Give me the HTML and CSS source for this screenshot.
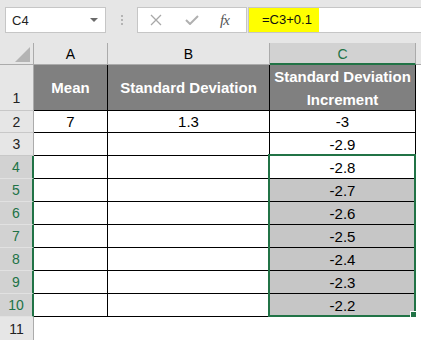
FILE: index.html
```html
<!DOCTYPE html>
<html lang="en">
<head>
    <meta charset="UTF-8">
    <title>Standard Deviation Increment</title>
    <link rel="stylesheet" href="styles.css">
</head>
<body>
    <div class="toolbar">
        <div class="namebox">
            <span>C4</span>
            <span class="caret"></span>
        </div>
        <div class="grip"><i></i><i></i><i></i></div>
        <div class="fbtns">
            <svg class="ico-x" width="12" height="12" viewBox="0 0 12 12">
                <path d="M1 1 L11 11 M11 1 L1 11" stroke="#a8a8a8" stroke-width="1.3" fill="none"/>
            </svg>
            <svg class="ico-check" width="14" height="10" viewBox="0 0 14 10">
                <path d="M1 5 L5 9 L13 1" stroke="#b0b0b0" stroke-width="2" fill="none"/>
            </svg>
            <span class="fx">fx</span>
        </div>
        <div class="finput"><span class="formula">=C3+0.1</span></div>
    </div>

    <div class="sheet">
        <!-- column headers -->
        <div class="corner"><span class="tri"></span></div>
        <div class="colhd">A</div>
        <div class="colhd">B</div>
        <div class="colhd active">C</div>
        <div class="colhd rest"></div>

        <!-- row 1 -->
        <div class="rowhd tall">1</div>
        <div class="cell hd">Mean</div>
        <div class="cell hd">Standard Deviation</div>
        <div class="cell hd">Standard Deviation<br>Increment</div>
        <div class="blank"></div>

        <!-- row 2 -->
        <div class="rowhd">2</div>
        <div class="cell">7</div>
        <div class="cell">1.3</div>
        <div class="cell">-3</div>
        <div class="blank"></div>

        <!-- row 3 -->
        <div class="rowhd">3</div>
        <div class="cell"></div>
        <div class="cell"></div>
        <div class="cell">-2.9</div>
        <div class="blank"></div>

        <!-- selected rows 4-10 -->
        <div class="rowhd sel">4</div>
        <div class="cell"></div>
        <div class="cell"></div>
        <div class="cell">-2.8</div>
        <div class="blank"></div>

        <div class="rowhd sel">5</div>
        <div class="cell"></div>
        <div class="cell"></div>
        <div class="cell shade">-2.7</div>
        <div class="blank"></div>

        <div class="rowhd sel">6</div>
        <div class="cell"></div>
        <div class="cell"></div>
        <div class="cell shade">-2.6</div>
        <div class="blank"></div>

        <div class="rowhd sel">7</div>
        <div class="cell"></div>
        <div class="cell"></div>
        <div class="cell shade">-2.5</div>
        <div class="blank"></div>

        <div class="rowhd sel">8</div>
        <div class="cell"></div>
        <div class="cell"></div>
        <div class="cell shade">-2.4</div>
        <div class="blank"></div>

        <div class="rowhd sel">9</div>
        <div class="cell"></div>
        <div class="cell"></div>
        <div class="cell shade">-2.3</div>
        <div class="blank"></div>

        <div class="rowhd sel">10</div>
        <div class="cell"></div>
        <div class="cell"></div>
        <div class="cell shade">-2.2</div>
        <div class="blank"></div>

        <!-- row 11 -->
        <div class="rowhd last">11</div>
        <div class="blank"></div>
        <div class="blank"></div>
        <div class="blank"></div>
        <div class="blank"></div>

        <!-- selection frame over C4:C10 -->
        <div class="selection"><span class="handle"></span></div>
    </div>
</body>
</html>
```

FILE: styles.css
```css
body {
    margin: 0;
    padding: 0;
    width: 421px;
    height: 340px;
    overflow: hidden;
    background: #fff;
    font-family: "Liberation Sans", Arial, sans-serif;
    color: #000;
}
.toolbar {
    display: flex;
    align-items: flex-start;
    height: 43px;
    padding-top: 7px;
    box-sizing: border-box;
    background: #e6e6e6;
}
.namebox {
    margin-left: 5px;
    width: 101px;
    height: 26px;
    box-sizing: border-box;
    border: 1px solid #c6c6c6;
    background: #fff;
    display: flex;
    align-items: center;
    justify-content: space-between;
    padding: 0 7px 0 6px;
    font-size: 13px;
    color: #222;
}
.caret {
    width: 0;
    height: 0;
    border-left: 4px solid transparent;
    border-right: 4px solid transparent;
    border-top: 4px solid #6a6a6a;
}
.grip {
    width: 31px;
    display: flex;
    flex-direction: column;
    align-items: center;
    gap: 2px;
    padding-top: 8px;
}
.grip i {
    display: block;
    width: 2px;
    height: 2px;
    background: #b4b4b4;
}
.fbtns {
    width: 110px;
    height: 26px;
    box-sizing: border-box;
    border: 1px solid #c6c6c6;
    background: #fff;
    display: flex;
    align-items: center;
}
.ico-x {
    margin-left: 12px;
}
.ico-check {
    margin-left: 23px;
}
.fx {
    margin-left: 21px;
    font-family: "Liberation Serif", "Times New Roman", serif;
    font-style: italic;
    font-size: 15px;
    color: #555;
    letter-spacing: -1px;
}
.finput {
    flex: 1;
    height: 26px;
    margin-left: 1px;
    box-sizing: border-box;
    border: 1px solid #c6c6c6;
    border-right: none;
    background: #fff;
}
.formula {
    display: block;
    width: 70px;
    height: 24px;
    box-sizing: border-box;
    padding-left: 13px;
    background: #ffff00;
    font-size: 13px;
    line-height: 24px;
    color: #111;
}
.sheet {
    position: relative;
    display: grid;
    grid-template-columns: 34px 74px 162px 146px 1fr;
    grid-template-rows: 22px 46px 22px repeat(8, 23px) 23px;
}
.sheet > div {
    box-sizing: border-box;
    display: flex;
    align-items: center;
    justify-content: center;
}
.corner {
    background: #e6e6e6;
    border-right: 1px solid #ababab;
    border-bottom: 1px solid #ababab;
    align-items: flex-end !important;
    justify-content: flex-end !important;
    padding: 0 3px 2px 0;
}
.tri {
    width: 0;
    height: 0;
    border-left: 15px solid transparent;
    border-bottom: 15px solid #b4b4b4;
}
.colhd {
    background: #e6e6e6;
    border-right: 1px solid #ababab;
    border-bottom: 1px solid #ababab;
    font-size: 14px;
    padding-top: 1px;
}
.colhd.active {
    background: #d2d2d2;
    color: #217346;
    border-bottom: 2px solid #217346;
}
.colhd.rest {
    border-right: none;
}
.rowhd {
    background: #e6e6e6;
    border-right: 1px solid #ababab;
    border-bottom: 1px solid #c8c8c8;
    font-size: 14px;
    color: #222;
}
.rowhd.tall {
    align-items: flex-end !important;
    padding-bottom: 4px;
}
.rowhd.sel {
    background: #d2d2d2;
    color: #217346;
    border-right: 2px solid #217346;
    border-bottom-color: #e1e1e1;
}
.rowhd.last {
    border-bottom: none;
}
.cell {
    border-right: 1px solid #000;
    border-bottom: 1px solid #000;
    font-size: 15px;
    background: #fff;
}
.cell.hd {
    background: #808080;
    color: #fff;
    font-weight: bold;
    font-size: 15px;
    line-height: 23px;
    text-align: center;
}
.cell.shade {
    background: #c6c6c6;
}
.blank {
    background: #fff;
}
.selection {
    position: absolute;
    left: 268px;
    top: 111px;
    width: 148px;
    height: 163px;
    box-sizing: border-box;
    border: 2px solid #217346;
    pointer-events: none;
}
.handle {
    position: absolute;
    right: -3px;
    bottom: -3px;
    width: 5px;
    height: 5px;
    background: #217346;
    border: 1px solid #fff;
}
```
